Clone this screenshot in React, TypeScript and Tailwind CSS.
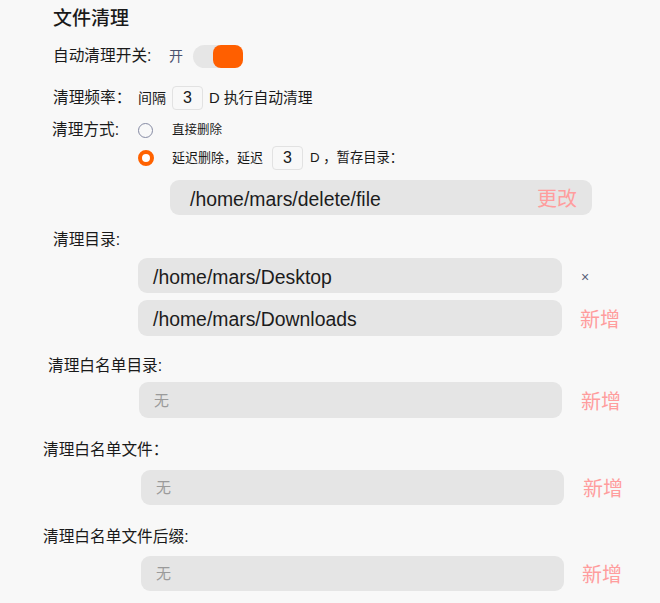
import React from "react";

const font = { fontFamily: '"Liberation Sans", "Noto Sans CJK SC", sans-serif' };

function Field({ text, placeholder, ml, w, h }: { text?: string; placeholder?: string; ml: string; w: string; h: string }) {
  return (
    <div className={`${ml} ${w} ${h} flex items-center rounded-[9px] bg-[#e5e5e5]`}>
      {text ? (
        <span className="pl-[15px] pt-[4px] text-[19.4px] text-[#1c1c1c]">{text}</span>
      ) : (
        <span className="pl-[15px] pt-[2px] text-[15px] text-[#9a9a9a]">{placeholder}</span>
      )}
    </div>
  );
}

export default function App() {
  return (
    <div style={font} className="w-[660px] h-[603px] bg-[#f8f8f8] overflow-hidden flex flex-col text-[#1a1a1a]">
      <div className="h-[38px] flex items-center pl-[53px] text-[19px] font-medium">文件清理</div>

      <div className="mt-[6px] h-[24px] flex items-center pl-[53px]">
        <span className="text-[15.7px] w-[116px]">自动清理开关:</span>
        <span className="text-[14px] text-[#4a5270]">开</span>
        <div className="ml-[10px] w-[50px] h-[23px] rounded-full bg-[#e6e6e6] flex justify-end">
          <div className="w-[30px] h-[23px] rounded-[8px] bg-[#ff5f00]" />
        </div>
      </div>

      <div className="mt-[18px] h-[24px] flex items-center pl-[53px]">
        <span className="w-[85px] text-[15.7px]">清理频率：</span>
        <span className="text-[14px]">间隔</span>
        <div className="ml-[6px] w-[31px] h-[24px] rounded-[4px] border border-[#e2e2e2] flex items-center justify-center text-[16px]">3</div>
        <span className="ml-[6px] text-[14.8px]">D 执行自动清理</span>
      </div>

      <div className="mt-[12px] h-[16px] flex items-center pl-[52px]">
        <span className="text-[15.7px] w-[86px]">清理方式:</span>
        <div className="w-[15px] h-[15px] rounded-full border-[1.5px] border-[#858aa3]" />
        <span className="ml-[19px] text-[12.5px]">直接删除</span>
      </div>

      <div className="mt-[8px] h-[24px] flex items-center pl-[138px]">
        <div className="w-[16px] h-[16px] rounded-full border-[4px] border-[#ff6200] bg-white" />
        <span className="ml-[18px] text-[13px]">延迟删除，延迟</span>
        <div className="ml-[9px] w-[31px] h-[24px] rounded-[4px] border border-[#e2e2e2] flex items-center justify-center text-[16px]">3</div>
        <span className="ml-[7px] text-[13.3px]">D ，暂存目录：</span>
      </div>

      <div className="mt-[10px] ml-[170px] w-[422px] h-[35px] flex items-center justify-between rounded-[9px] bg-[#e5e5e5]">
        <span className="pl-[20px] pt-[4px] text-[19.4px] text-[#1c1c1c]">/home/mars/delete/file</span>
        <span className="pr-[15px] pt-[2px] text-[20px] text-[#ff9d9d]">更改</span>
      </div>

      <div className="mt-[15px] h-[20px] flex items-center pl-[53px] text-[15.7px]">清理目录:</div>

      <div className="mt-[8px] flex items-center">
        <Field text="/home/mars/Desktop" ml="ml-[138px]" w="w-[424px]" h="h-[35px]" />
        <span className="ml-[19px] mt-[4px] text-[14px] text-[#5a6078]">×</span>
      </div>

      <div className="mt-[7px] flex items-center">
        <Field text="/home/mars/Downloads" ml="ml-[138px]" w="w-[424px]" h="h-[36px]" />
        <span className="ml-[18px] mt-[4px] text-[20px] text-[#ff9d9d]">新增</span>
      </div>

      <div className="mt-[20px] h-[20px] flex items-center pl-[48px] text-[15.7px]">清理白名单目录:</div>

      <div className="mt-[6px] flex items-center">
        <Field placeholder="无" ml="ml-[139px]" w="w-[423px]" h="h-[36px]" />
        <span className="ml-[19px] mt-[4px] text-[20px] text-[#ff9d9d]">新增</span>
      </div>

      <div className="mt-[22px] h-[20px] flex items-center pl-[43px] text-[15.7px]">清理白名单文件：</div>

      <div className="mt-[10px] flex items-center">
        <Field placeholder="无" ml="ml-[141px]" w="w-[423px]" h="h-[35px]" />
        <span className="ml-[19px] mt-[2px] text-[20px] text-[#ff9d9d]">新增</span>
      </div>

      <div className="mt-[22px] h-[20px] flex items-center pl-[43px] text-[15.7px]">清理白名单文件后缀:</div>

      <div className="mt-[9px] flex items-center">
        <Field placeholder="无" ml="ml-[141px]" w="w-[423px]" h="h-[35px]" />
        <span className="ml-[18px] mt-[2px] text-[20px] text-[#ff9d9d]">新增</span>
      </div>
    </div>
  );
}
